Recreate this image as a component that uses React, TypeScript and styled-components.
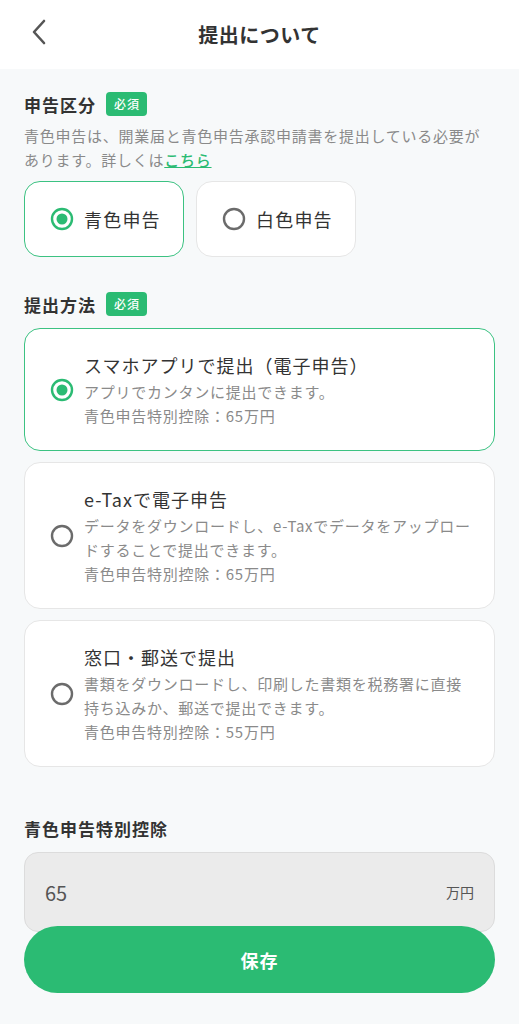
import React, { useState } from 'react'
import styled, { createGlobalStyle } from 'styled-components'

const GlobalStyle = createGlobalStyle`
  * { box-sizing: border-box; }
  html, body {
    margin: 0;
    padding: 0;
    background: #f7f9fa;
    font-family: "Noto Sans CJK JP", "Noto Sans", sans-serif;
    color: #333333;
  }
`

const Page = styled.div`
  min-height: 1024px;
  background: #f7f9fa;
  padding-bottom: 120px;
`

const Header = styled.header`
  height: 69px;
  background: #ffffff;
  display: flex;
  align-items: center;
  justify-content: center;
  position: relative;
`

const BackButton = styled.button`
  position: absolute;
  left: 26px;
  top: 17px;
  width: 28px;
  height: 30px;
  border: none;
  background: none;
  padding: 0;
  display: flex;
  align-items: center;
  justify-content: center;
`

const HeaderTitle = styled.h1`
  margin: 0;
  font-size: 20px;
  font-weight: 700;
  color: #333333;
  letter-spacing: 0.5px;
`

const Content = styled.main`
  padding: 20px 24px 0;
  display: flex;
  flex-direction: column;
`

const SectionHead = styled.div<{ $top?: number }>`
  display: flex;
  align-items: center;
  gap: 10px;
  margin-top: ${p => p.$top ?? 0}px;
  height: 30px;
`

const SectionLabel = styled.h2`
  margin: 0;
  font-size: 17px;
  font-weight: 700;
  letter-spacing: 1px;
  color: #333333;
`

const Badge = styled.span`
  background: #2bbb73;
  color: #ffffff;
  font-size: 12px;
  font-weight: 500;
  letter-spacing: 1px;
  padding: 0 7px 0 8px;
  height: 24px;
  line-height: 24px;
  border-radius: 4px;
`

const Description = styled.p`
  margin: 5px 0 0;
  font-size: 15px;
  letter-spacing: 0.75px;
  line-height: 24px;
  color: #8a8a8a;
`

const Link = styled.a`
  color: #2bbb73;
  text-decoration: underline;
  font-weight: 500;
`

const ChoiceRow = styled.div`
  display: flex;
  gap: 12px;
  margin-top: 9px;
`

const ChoiceCard = styled.button<{ $selected: boolean }>`
  width: 160px;
  height: 76px;
  border-radius: 16px;
  background: #ffffff;
  border: 1.5px solid ${p => (p.$selected ? '#3cc282' : '#e6e6e6')};
  display: flex;
  align-items: center;
  padding: 0 0 0 25px;
  gap: 10px;
  font-family: inherit;
  font-size: 18px;
  letter-spacing: 1.2px;
  color: #333333;
  cursor: pointer;
`

const MethodList = styled.div`
  display: flex;
  flex-direction: column;
  gap: 11px;
  margin-top: 9px;
`

const MethodCard = styled.button<{ $selected: boolean }>`
  width: 100%;
  border-radius: 16px;
  background: #ffffff;
  border: 1.5px solid ${p => (p.$selected ? '#3cc282' : '#e6e6e6')};
  display: flex;
  align-items: center;
  gap: 10px;
  padding: 22px 10px 22px 25px;
  text-align: left;
  font-family: inherit;
  cursor: pointer;
`

const MethodBody = styled.div`
  display: flex;
  flex-direction: column;
`

const MethodTitle = styled.div`
  font-size: 18px;
  letter-spacing: 1px;
  line-height: 28px;
  color: #333333;
  margin-bottom: 1px;
`

const MethodText = styled.div`
  font-size: 15px;
  letter-spacing: 0.75px;
  line-height: 24px;
  color: #8a8a8a;
  white-space: nowrap;
`

const FieldLabel = styled(SectionLabel)`
  margin-top: 47px;
  line-height: 30px;
`

const InputBox = styled.div`
  margin-top: 8px;
  height: 80px;
  border-radius: 14px;
  background: #ebebeb;
  border: 1px solid #dcdcdc;
  display: flex;
  align-items: center;
  justify-content: space-between;
  padding: 0 20px 0 20px;
`

const InputValue = styled.span`
  font-size: 20px;
  color: #555555;
`

const Unit = styled.span`
  font-size: 14px;
  color: #555555;
`

const Footer = styled.div`
  position: fixed;
  left: 24px;
  right: 24px;
  bottom: 31px;
`

const SaveButton = styled.button`
  width: 100%;
  height: 67px;
  border: none;
  border-radius: 34px;
  background: #2bbb73;
  color: #ffffff;
  font-family: inherit;
  font-size: 18px;
  font-weight: 700;
  letter-spacing: 1px;
`

function Radio({ checked }: { checked: boolean }) {
  return (
    <svg width="24" height="24" viewBox="0 0 24 24" style={{ flexShrink: 0 }}>
      <circle cx="12" cy="12" r="10" fill="none" stroke={checked ? '#2bbb73' : '#6b6b6b'} strokeWidth="2.4" />
      {checked && <circle cx="12" cy="12" r="5.5" fill="#2bbb73" />}
    </svg>
  )
}

const methods = [
  {
    title: 'スマホアプリで提出（電子申告）',
    lines: ['アプリでカンタンに提出できます。'],
    amount: '青色申告特別控除：65万円',
  },
  {
    title: 'e-Taxで電子申告',
    lines: ['データをダウンロードし、e-Taxでデータをアップロー', 'ドすることで提出できます。'],
    amount: '青色申告特別控除：65万円',
  },
  {
    title: '窓口・郵送で提出',
    lines: ['書類をダウンロードし、印刷した書類を税務署に直接', '持ち込みか、郵送で提出できます。'],
    amount: '青色申告特別控除：55万円',
  },
]

export default function App() {
  const [kind, setKind] = useState(0)
  const [method, setMethod] = useState(0)

  return (
    <>
      <GlobalStyle />
      <Page>
        <Header>
          <BackButton aria-label="戻る">
            <svg width="18" height="26" viewBox="0 0 18 26">
              <path d="M13 2 L3 13 L13 24" fill="none" stroke="#555" strokeWidth="2.6" strokeLinecap="round" strokeLinejoin="round" />
            </svg>
          </BackButton>
          <HeaderTitle>提出について</HeaderTitle>
        </Header>
        <Content>
          <SectionHead>
            <SectionLabel>申告区分</SectionLabel>
            <Badge>必須</Badge>
          </SectionHead>
          <Description>
            青色申告は、開業届と青色申告承認申請書を提出している必要があります。詳しくは<Link>こちら</Link>
          </Description>
          <ChoiceRow>
            {['青色申告', '白色申告'].map((label, i) => (
              <ChoiceCard key={label} $selected={kind === i} onClick={() => setKind(i)}>
                <Radio checked={kind === i} />
                {label}
              </ChoiceCard>
            ))}
          </ChoiceRow>

          <SectionHead $top={32}>
            <SectionLabel>提出方法</SectionLabel>
            <Badge>必須</Badge>
          </SectionHead>
          <MethodList>
            {methods.map((m, i) => (
              <MethodCard key={m.title} $selected={method === i} onClick={() => setMethod(i)}>
                <Radio checked={method === i} />
                <MethodBody>
                  <MethodTitle>{m.title}</MethodTitle>
                  {m.lines.map(l => (
                    <MethodText key={l}>{l}</MethodText>
                  ))}
                  <MethodText>{m.amount}</MethodText>
                </MethodBody>
              </MethodCard>
            ))}
          </MethodList>

          <FieldLabel>青色申告特別控除</FieldLabel>
          <InputBox>
            <InputValue>65</InputValue>
            <Unit>万円</Unit>
          </InputBox>
        </Content>
        <Footer>
          <SaveButton>保存</SaveButton>
        </Footer>
      </Page>
    </>
  )
}
